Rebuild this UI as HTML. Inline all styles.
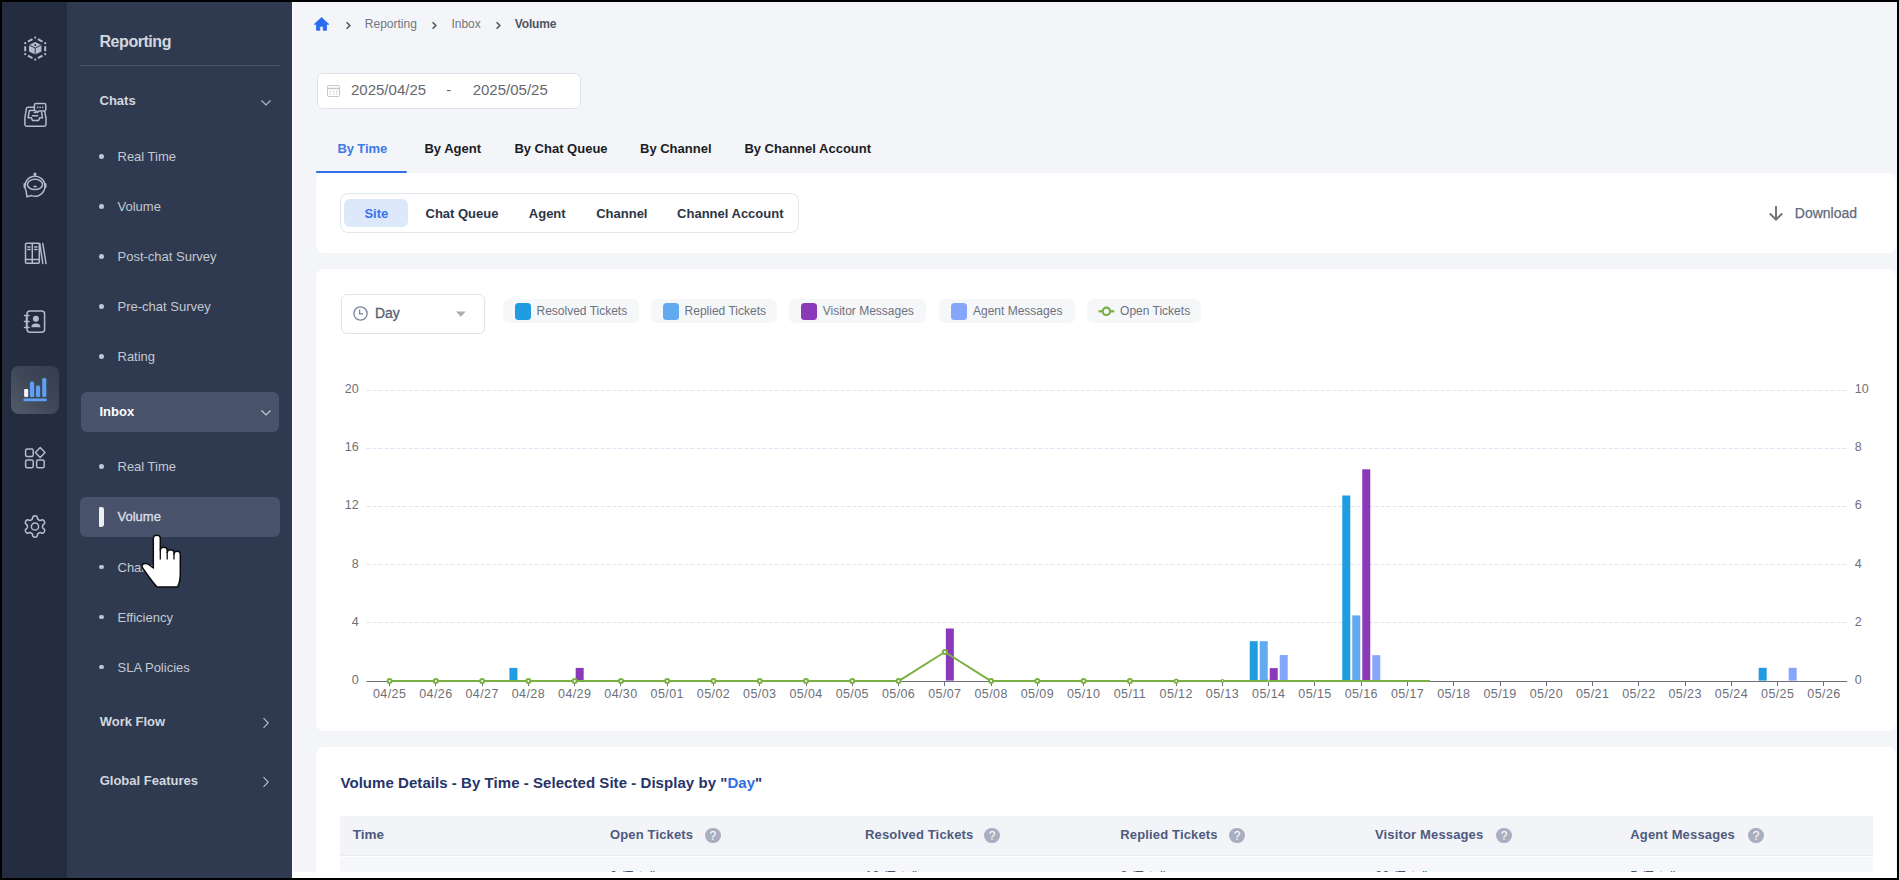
<!DOCTYPE html>
<html><head><meta charset="utf-8">
<style>
*{margin:0;padding:0;box-sizing:border-box}
html,body{width:1899px;height:880px;overflow:hidden;background:#000}
body{font-family:"Liberation Sans",sans-serif;position:relative}
.a{position:absolute;white-space:nowrap}
.t{position:absolute;white-space:nowrap;line-height:1}
</style></head><body>
<div class="a" style="left:2px;top:2px;width:65px;height:876px;background:#232d3f"></div>
<div class="a" style="left:11px;top:366px;width:48px;height:48px;border-radius:8px;background:linear-gradient(45deg,#545c6c 0%,#3f4858 50%,#343d4f 100%)"></div>
<svg class="a" style="left:0;top:0" width="67" height="880" viewBox="0 0 67 880">
<g fill="none" stroke="#b4bbca" stroke-width="1.5" stroke-linecap="round" stroke-linejoin="round">
 <!-- hex dashed -->
 <path d="M37.90 39.11 L42.50 41.69 M45.20 46.17 L45.20 51.23 M42.50 55.66 L37.90 58.14 M32.50 58.14 L27.90 55.66 M25.20 51.23 L25.20 46.17 M27.90 41.69 L32.50 39.11" stroke-width="2" stroke-linecap="butt"/>
 <!-- inbox -->
 <path d="M34 107.3 H28 Q26.6 107.3 26.3 108.8 L24.9 118 V124.6 Q24.9 126.3 26.6 126.3 H44.3 Q46 126.3 46 124.6 V118 L44.6 111.4"/>
 <path d="M34 110.4 H29.4 L28.1 117.7 H31.2 L32.6 120.6 H38.4 L39.8 117.7 H42.5 L41.6 112.6"/>
 <path d="M32.4 115.8 H37.7 M34.3 112.6 H35.8"/>
 <path d="M36 103.6 H44.2 Q45.8 103.6 45.8 105.2 V109.4 Q45.8 111 44.2 111 H38.8 L37.4 112.6 L36.2 111 H36 Q34.4 111 34.4 109.4 V105.2 Q34.4 103.6 36 103.6 Z"/>
 <!-- bot -->
 <path d="M31.6 195.6 A10 10 0 1 0 26.2 191 L26.9 196.8 Z"/>
 <ellipse cx="35" cy="184.4" rx="7.6" ry="5.1" />
 <path d="M34 186.6 H36.2 M35 174.5 V176"/>
 <path d="M24.6 184 V187 M45.4 184 V187" stroke-width="2.2"/>
 <!-- books -->
 <rect x="25.5" y="243.3" width="13.8" height="20" rx="1"/>
 <path d="M32.3 243.5 V263 M25.5 259.5 H39.3 M27.8 247 H30 M27.8 249.5 H30 M34.7 247 H37 M34.7 249.5 H37 M39.8 243.5 L42.8 263.5 M42.8 243.5 L46 263.5"/>
 <!-- contacts -->
 <rect x="27" y="311" width="17.6" height="21.2" rx="3"/>
 <path d="M24.5 315.5 H29 M24.5 321.5 H29 M24.5 327.5 H29 M26.5 316.5 V320.5 M26.5 322.5 V326.5"/>
 <!-- apps -->
 <rect x="25.6" y="448.9" width="7.6" height="7.6" rx="1.5"/>
 <rect x="25.6" y="460.1" width="7.6" height="7.6" rx="1.5"/>
 <rect x="36.6" y="460.1" width="7.6" height="7.6" rx="1.5"/>
 <path d="M40.2 447.6 L45 452.5 L40.2 457.4 L35.4 452.5 Z"/>
 <!-- gear -->
 <circle cx="35" cy="526.5" r="3.6"/>
 <path d="M42.60 526.50 L42.60 526.63 L42.60 526.77 L42.61 526.90 L42.61 527.03 L42.62 527.17 L42.64 527.30 L42.66 527.44 L42.70 527.58 L42.76 527.73 L42.84 527.88 L42.96 528.05 L43.12 528.23 L43.31 528.42 L43.54 528.63 L43.79 528.86 L44.03 529.09 L44.24 529.33 L44.42 529.56 L44.54 529.78 L44.62 530.00 L44.66 530.21 L44.66 530.40 L44.65 530.59 L44.61 530.78 L44.56 530.96 L44.50 531.13 L44.43 531.31 L44.35 531.47 L44.27 531.64 L44.18 531.80 L44.08 531.96 L43.98 532.11 L43.88 532.26 L43.76 532.41 L43.64 532.55 L43.51 532.68 L43.37 532.81 L43.21 532.92 L43.04 533.01 L42.84 533.08 L42.61 533.12 L42.36 533.12 L42.07 533.09 L41.76 533.03 L41.43 532.93 L41.12 532.83 L40.82 532.74 L40.55 532.67 L40.32 532.62 L40.12 532.60 L39.94 532.61 L39.79 532.63 L39.65 532.67 L39.51 532.71 L39.39 532.77 L39.27 532.83 L39.15 532.89 L39.03 532.95 L38.92 533.02 L38.80 533.08 L38.69 533.15 L38.57 533.22 L38.46 533.29 L38.34 533.36 L38.23 533.43 L38.12 533.52 L38.02 533.61 L37.91 533.71 L37.82 533.83 L37.72 533.98 L37.64 534.17 L37.56 534.39 L37.49 534.66 L37.43 534.96 L37.36 535.29 L37.27 535.62 L37.17 535.92 L37.06 536.18 L36.93 536.40 L36.78 536.58 L36.62 536.72 L36.45 536.82 L36.28 536.90 L36.10 536.96 L35.92 537.01 L35.74 537.04 L35.55 537.07 L35.37 537.09 L35.18 537.10 L35.00 537.10 L34.82 537.10 L34.63 537.09 L34.45 537.07 L34.26 537.04 L34.08 537.01 L33.90 536.96 L33.72 536.90 L33.55 536.82 L33.38 536.72 L33.22 536.58 L33.07 536.40 L32.94 536.18 L32.83 535.92 L32.73 535.62 L32.64 535.29 L32.57 534.96 L32.51 534.66 L32.44 534.39 L32.36 534.17 L32.28 533.98 L32.18 533.83 L32.09 533.71 L31.98 533.61 L31.88 533.52 L31.77 533.43 L31.66 533.36 L31.54 533.29 L31.43 533.22 L31.31 533.15 L31.20 533.08 L31.08 533.02 L30.97 532.95 L30.85 532.89 L30.73 532.83 L30.61 532.77 L30.49 532.71 L30.35 532.67 L30.21 532.63 L30.06 532.61 L29.88 532.60 L29.68 532.62 L29.45 532.67 L29.18 532.74 L28.88 532.83 L28.57 532.93 L28.24 533.03 L27.93 533.09 L27.64 533.12 L27.39 533.12 L27.16 533.08 L26.96 533.01 L26.79 532.92 L26.63 532.81 L26.49 532.68 L26.36 532.55 L26.24 532.41 L26.12 532.26 L26.02 532.11 L25.92 531.96 L25.82 531.80 L25.73 531.64 L25.65 531.47 L25.57 531.31 L25.50 531.13 L25.44 530.96 L25.39 530.78 L25.35 530.59 L25.34 530.40 L25.34 530.21 L25.38 530.00 L25.46 529.78 L25.58 529.56 L25.76 529.33 L25.97 529.09 L26.21 528.86 L26.46 528.63 L26.69 528.42 L26.88 528.23 L27.04 528.05 L27.16 527.88 L27.24 527.73 L27.30 527.58 L27.34 527.44 L27.36 527.30 L27.38 527.17 L27.39 527.03 L27.39 526.90 L27.40 526.77 L27.40 526.63 L27.40 526.50 L27.40 526.37 L27.40 526.23 L27.39 526.10 L27.39 525.97 L27.38 525.83 L27.36 525.70 L27.34 525.56 L27.30 525.42 L27.24 525.27 L27.16 525.12 L27.04 524.95 L26.88 524.77 L26.69 524.58 L26.46 524.37 L26.21 524.14 L25.97 523.91 L25.76 523.67 L25.58 523.44 L25.46 523.22 L25.38 523.00 L25.34 522.79 L25.34 522.60 L25.35 522.41 L25.39 522.22 L25.44 522.04 L25.50 521.87 L25.57 521.69 L25.65 521.53 L25.73 521.36 L25.82 521.20 L25.92 521.04 L26.02 520.89 L26.12 520.74 L26.24 520.59 L26.36 520.45 L26.49 520.32 L26.63 520.19 L26.79 520.08 L26.96 519.99 L27.16 519.92 L27.39 519.88 L27.64 519.88 L27.93 519.91 L28.24 519.97 L28.57 520.07 L28.88 520.17 L29.18 520.26 L29.45 520.33 L29.68 520.38 L29.88 520.40 L30.06 520.39 L30.21 520.37 L30.35 520.33 L30.49 520.29 L30.61 520.23 L30.73 520.17 L30.85 520.11 L30.97 520.05 L31.08 519.98 L31.20 519.92 L31.31 519.85 L31.43 519.78 L31.54 519.71 L31.66 519.64 L31.77 519.57 L31.88 519.48 L31.98 519.39 L32.09 519.29 L32.18 519.17 L32.28 519.02 L32.36 518.83 L32.44 518.61 L32.51 518.34 L32.57 518.04 L32.64 517.71 L32.73 517.38 L32.83 517.08 L32.94 516.82 L33.07 516.60 L33.22 516.42 L33.38 516.28 L33.55 516.18 L33.72 516.10 L33.90 516.04 L34.08 515.99 L34.26 515.96 L34.45 515.93 L34.63 515.91 L34.82 515.90 L35.00 515.90 L35.18 515.90 L35.37 515.91 L35.55 515.93 L35.74 515.96 L35.92 515.99 L36.10 516.04 L36.28 516.10 L36.45 516.18 L36.62 516.28 L36.78 516.42 L36.93 516.60 L37.06 516.82 L37.17 517.08 L37.27 517.38 L37.36 517.71 L37.43 518.04 L37.49 518.34 L37.56 518.61 L37.64 518.83 L37.72 519.02 L37.82 519.17 L37.91 519.29 L38.02 519.39 L38.12 519.48 L38.23 519.57 L38.34 519.64 L38.46 519.71 L38.57 519.78 L38.69 519.85 L38.80 519.92 L38.92 519.98 L39.03 520.05 L39.15 520.11 L39.27 520.17 L39.39 520.23 L39.51 520.29 L39.65 520.33 L39.79 520.37 L39.94 520.39 L40.12 520.40 L40.32 520.38 L40.55 520.33 L40.82 520.26 L41.12 520.17 L41.43 520.07 L41.76 519.97 L42.07 519.91 L42.36 519.88 L42.61 519.88 L42.84 519.92 L43.04 519.99 L43.21 520.08 L43.37 520.19 L43.51 520.32 L43.64 520.45 L43.76 520.59 L43.88 520.74 L43.98 520.89 L44.08 521.04 L44.18 521.20 L44.27 521.36 L44.35 521.53 L44.43 521.69 L44.50 521.87 L44.56 522.04 L44.61 522.22 L44.65 522.41 L44.66 522.60 L44.66 522.79 L44.62 523.00 L44.54 523.22 L44.42 523.44 L44.24 523.67 L44.03 523.91 L43.79 524.14 L43.54 524.37 L43.31 524.58 L43.12 524.77 L42.96 524.95 L42.84 525.12 L42.76 525.27 L42.70 525.42 L42.66 525.56 L42.64 525.70 L42.62 525.83 L42.61 525.97 L42.61 526.10 L42.60 526.23 L42.60 526.37Z" stroke-width="1.6"/>
</g>
<g fill="#b4bbca">
 <circle cx="35.2" cy="37.6" r="1.1"/><circle cx="35.2" cy="59.6" r="1.1"/>
 <circle cx="25.2" cy="43.2" r="1.1"/><circle cx="45.2" cy="43.2" r="1.1"/>
 <circle cx="25.2" cy="54.2" r="1.1"/><circle cx="45.2" cy="54.2" r="1.1"/>
 <path d="M29 45 L35.2 42 L41.4 45 L41.4 51.5 L35.2 54.6 L29 51.5 Z"/>
 <rect x="36.9" y="106.6" width="1.5" height="1.5"/><rect x="39.4" y="106.6" width="1.5" height="1.5"/><rect x="41.9" y="106.6" width="1.5" height="1.5"/>
 <circle cx="35" cy="174" r="1.6"/>
 <circle cx="35.9" cy="318.7" r="3"/>
 <path d="M31.3 327.3 Q31.3 323.4 35.9 323.4 Q40.5 323.4 40.5 327.3 Z"/>
</g>
<g stroke="#232d3f" stroke-width="0.9" fill="none">
 <path d="M29 45 L35.2 48 L41.4 45 M35.2 48 V54.6"/>
</g>
<circle cx="35.2" cy="45" r="0.9" fill="#232d3f"/>
<!-- chart icon -->
<rect x="24.1" y="389" width="4.1" height="8" rx="1.2" fill="#f4f5f7"/>
<rect x="29.9" y="381.5" width="4.3" height="15.5" rx="1.5" fill="#5e9ff6"/>
<rect x="36" y="385.6" width="4.1" height="11.4" rx="1.5" fill="#5e9ff6"/>
<rect x="42.2" y="377.9" width="4.1" height="19.1" rx="1.5" fill="#5e9ff6"/>
<rect x="23.4" y="398.5" width="23.5" height="2.7" rx="1.3" fill="#5e9ff6"/>
</svg>
<div class="a" style="left:67px;top:2px;width:225px;height:876px;background:#2f3a50"></div>
<div class="t" style="left:99.5px;top:34.12px;font-size:16px;color:#d3d7de;font-weight:bold;letter-spacing:-0.45px;">Reporting</div>
<div class="a" style="left:80px;top:65px;width:200px;height:1px;background:#4a5468"></div>
<div class="t" style="left:99.5px;top:94.37px;font-size:13px;color:#d3d7de;font-weight:bold;">Chats</div>
<svg class="a" style="left:260px;top:98.5px" width="12" height="8" viewBox="0 0 12 8"><path d="M1.5 1.5 L6 6 L10.5 1.5" fill="none" stroke="#b8bec9" stroke-width="1.1"/></svg>
<div class="a" style="left:99px;top:154.1px;width:4.6px;height:4.6px;border-radius:50%;background:#c0c5ce"></div>
<div class="t" style="left:117.5px;top:150.27px;font-size:13px;color:#c3c8d1;">Real Time</div>
<div class="a" style="left:99px;top:204.1px;width:4.6px;height:4.6px;border-radius:50%;background:#c0c5ce"></div>
<div class="t" style="left:117.5px;top:200.27px;font-size:13px;color:#c3c8d1;">Volume</div>
<div class="a" style="left:99px;top:254.1px;width:4.6px;height:4.6px;border-radius:50%;background:#c0c5ce"></div>
<div class="t" style="left:117.5px;top:250.27px;font-size:13px;color:#c3c8d1;">Post-chat Survey</div>
<div class="a" style="left:99px;top:304.1px;width:4.6px;height:4.6px;border-radius:50%;background:#c0c5ce"></div>
<div class="t" style="left:117.5px;top:300.27px;font-size:13px;color:#c3c8d1;">Pre-chat Survey</div>
<div class="a" style="left:99px;top:354.1px;width:4.6px;height:4.6px;border-radius:50%;background:#c0c5ce"></div>
<div class="t" style="left:117.5px;top:350.27px;font-size:13px;color:#c3c8d1;">Rating</div>
<div class="a" style="left:81px;top:392px;width:198px;height:40px;background:#48526a;border-radius:6px"></div>
<div class="t" style="left:99.5px;top:404.67px;font-size:13px;color:#ffffff;font-weight:bold;">Inbox</div>
<svg class="a" style="left:260px;top:408.5px" width="12" height="8" viewBox="0 0 12 8"><path d="M1.5 1.5 L6 6 L10.5 1.5" fill="none" stroke="#c9ced7" stroke-width="1.1"/></svg>
<div class="a" style="left:80px;top:496.5px;width:200px;height:40px;background:#48526a;border-radius:6px"></div>
<div class="a" style="left:99px;top:506.5px;width:4.5px;height:20.5px;background:#eceef2;border-radius:1.2px 2.4px 2.4px 1.2px"></div>
<div class="a" style="left:99px;top:464.1px;width:4.6px;height:4.6px;border-radius:50%;background:#c0c5ce"></div>
<div class="t" style="left:117.5px;top:460.27px;font-size:13px;color:#c3c8d1;">Real Time</div>
<div class="t" style="left:117.5px;top:510.47px;font-size:13px;color:#dcdfe6;-webkit-text-stroke:0.35px #dcdfe6;">Volume</div>
<div class="a" style="left:99px;top:564.5px;width:4.6px;height:4.6px;border-radius:50%;background:#c0c5ce"></div>
<div class="t" style="left:117.5px;top:560.67px;font-size:13px;color:#c3c8d1;">Channel</div>
<div class="a" style="left:99px;top:614.5px;width:4.6px;height:4.6px;border-radius:50%;background:#c0c5ce"></div>
<div class="t" style="left:117.5px;top:610.67px;font-size:13px;color:#c3c8d1;">Efficiency</div>
<div class="a" style="left:99px;top:664.5px;width:4.6px;height:4.6px;border-radius:50%;background:#c0c5ce"></div>
<div class="t" style="left:117.5px;top:660.67px;font-size:13px;color:#c3c8d1;">SLA Policies</div>
<div class="t" style="left:99.7px;top:715.37px;font-size:13px;color:#d3d7de;font-weight:bold;">Work Flow</div>
<svg class="a" style="left:261.5px;top:716.8px" width="8" height="12" viewBox="0 0 8 12"><path d="M1.5 1.2 L6.2 6 L1.5 10.8" fill="none" stroke="#b8bec9" stroke-width="1.1"/></svg>
<div class="t" style="left:99.7px;top:774.07px;font-size:13px;color:#d3d7de;font-weight:bold;">Global Features</div>
<svg class="a" style="left:261.5px;top:776.2px" width="8" height="12" viewBox="0 0 8 12"><path d="M1.5 1.2 L6.2 6 L1.5 10.8" fill="none" stroke="#b8bec9" stroke-width="1.1"/></svg>
<div class="a" style="left:292px;top:2px;width:1605px;height:876px;background:#f4f5f8"></div>
<svg class="a" style="left:313px;top:16px" width="17" height="16" viewBox="0 0 17 16"><path d="M8.5 1.5 L15.8 8.3 H13.5 V14.3 H10.2 V10.3 H6.8 V14.3 H3.5 V8.3 H1.2 Z" fill="#2b6cf0" stroke="#2b6cf0" stroke-width="0.8" stroke-linejoin="round"/></svg>
<svg class="a" style="left:344.5px;top:21px" width="7" height="9" viewBox="0 0 7 9"><path d="M1.6 1.3 L4.8 4.5 L1.6 7.7" fill="none" stroke="#4a5060" stroke-width="1.5"/></svg>
<svg class="a" style="left:431.3px;top:21px" width="7" height="9" viewBox="0 0 7 9"><path d="M1.6 1.3 L4.8 4.5 L1.6 7.7" fill="none" stroke="#4a5060" stroke-width="1.5"/></svg>
<svg class="a" style="left:494.6px;top:21px" width="7" height="9" viewBox="0 0 7 9"><path d="M1.6 1.3 L4.8 4.5 L1.6 7.7" fill="none" stroke="#4a5060" stroke-width="1.5"/></svg>
<div class="t" style="left:364.8px;top:17.89px;font-size:12px;color:#70757f;">Reporting</div>
<div class="t" style="left:451.4px;top:17.89px;font-size:12px;color:#70757f;">Inbox</div>
<div class="t" style="left:514.8px;top:17.89px;font-size:12px;color:#4e5563;font-weight:bold;letter-spacing:-0.15px;">Volume</div>
<div class="a" style="left:316.5px;top:73px;width:264px;height:35.5px;background:#fff;border:1px solid #dfe2e8;border-radius:6px"></div>
<svg class="a" style="left:326px;top:84px" width="15" height="14" viewBox="0 0 15 14"><rect x="1.5" y="1.5" width="12" height="11" rx="1" fill="none" stroke="#c3c7ce" stroke-width="1"/><path d="M1.5 4.5 H13.5" stroke="#c3c7ce" stroke-width="1.5"/><path d="M3.5 7.5 H5 M6.8 7.5 H8.3 M10 7.5 H11.5 M3.5 10 H5 M6.8 10 H8.3 M10 10 H11.5" stroke="#c3c7ce" stroke-width="1"/></svg>
<div class="t" style="left:351px;top:82.04px;font-size:15px;color:#66696e;">2025/04/25</div>
<div class="t" style="left:446.2px;top:82.04px;font-size:15px;color:#66696e;">-</div>
<div class="t" style="left:472.7px;top:82.04px;font-size:15px;color:#66696e;">2025/05/25</div>
<div class="t" style="left:337.4px;top:142.47px;font-size:13px;color:#4079e8;font-weight:bold;letter-spacing:-0.1px;">By Time</div>
<div class="t" style="left:424.4px;top:142.47px;font-size:13px;color:#1b1c1f;font-weight:bold;">By Agent</div>
<div class="t" style="left:514.4px;top:142.47px;font-size:13px;color:#1b1c1f;font-weight:bold;">By Chat Queue</div>
<div class="t" style="left:640px;top:142.47px;font-size:13px;color:#1b1c1f;font-weight:bold;">By Channel</div>
<div class="t" style="left:744.4px;top:142.47px;font-size:13px;color:#1b1c1f;font-weight:bold;">By Channel Account</div>
<div class="a" style="left:316px;top:173px;width:1580px;height:80px;background:#fff;border-radius:8px"></div>
<div class="a" style="left:316px;top:171px;width:91px;height:2px;background:#2f6fe8;border-radius:1px"></div>
<div class="a" style="left:340px;top:193px;width:459px;height:40px;background:#fff;border:1px solid #e3e6ec;border-radius:8px"></div>
<div class="a" style="left:343.6px;top:199px;width:64.2px;height:28px;background:#dde8fa;border-radius:6px"></div>
<div class="t" style="left:364.4px;top:206.87px;font-size:13px;color:#3574e8;font-weight:bold;">Site</div>
<div class="t" style="left:425.5px;top:206.87px;font-size:13px;color:#2b3446;font-weight:bold;">Chat Queue</div>
<div class="t" style="left:528.8px;top:206.87px;font-size:13px;color:#2b3446;font-weight:bold;">Agent</div>
<div class="t" style="left:596.2px;top:206.87px;font-size:13px;color:#2b3446;font-weight:bold;">Channel</div>
<div class="t" style="left:677.1px;top:206.87px;font-size:13px;color:#2b3446;font-weight:bold;">Channel Account</div>
<svg class="a" style="left:1767px;top:204px" width="18" height="18" viewBox="0 0 18 18"><path d="M9 2 V15.5 M2.8 9.5 L9 15.7 L15.2 9.5" fill="none" stroke="#6d7076" stroke-width="1.9" stroke-linejoin="miter"/></svg>
<div class="t" style="left:1794.8px;top:206.35px;font-size:14px;color:#5f6b7a;-webkit-text-stroke:0.25px #5f6b7a;">Download</div>
<div class="a" style="left:316px;top:269px;width:1580px;height:462px;background:#fff;border-radius:8px"></div>
<div class="a" style="left:340.5px;top:293.5px;width:144px;height:40px;background:#fff;border:1px solid #e0e3e9;border-radius:6px"></div>
<svg class="a" style="left:352px;top:305px" width="17" height="17" viewBox="0 0 17 17"><circle cx="8.5" cy="8.5" r="6.6" fill="none" stroke="#7b829c" stroke-width="1.3"/><path d="M7.6 4.6 V8.9 H11" fill="none" stroke="#7b829c" stroke-width="1.3"/></svg>
<div class="t" style="left:374.9px;top:305.86px;font-size:14px;color:#5a6070;-webkit-text-stroke:0.3px #5a6070;">Day</div>
<svg class="a" style="left:455px;top:311px" width="12" height="7" viewBox="0 0 12 7"><path d="M1 0.6 H10.8 L5.9 5.8 Z" fill="#a9adb5"/></svg>
<div class="a" style="left:503.3px;top:299.4px;width:135.5px;height:24px;background:#f6f7f9;border-radius:6px"></div>
<div class="a" style="left:515.1px;top:303.4px;width:16px;height:16.3px;background:#1f9de0;border-radius:3.5px"></div>
<div class="t" style="left:536.5px;top:304.99px;font-size:12px;color:#6b7280;">Resolved Tickets</div>
<div class="a" style="left:651px;top:299.4px;width:126.0px;height:24px;background:#f6f7f9;border-radius:6px"></div>
<div class="a" style="left:662.8px;top:303.4px;width:16px;height:16.3px;background:#62aaf0;border-radius:3.5px"></div>
<div class="t" style="left:684.6px;top:304.99px;font-size:12px;color:#6b7280;">Replied Tickets</div>
<div class="a" style="left:789.4px;top:299.4px;width:137.1px;height:24px;background:#f6f7f9;border-radius:6px"></div>
<div class="a" style="left:801.3px;top:303.4px;width:16px;height:16.3px;background:#8a3ab9;border-radius:3.5px"></div>
<div class="t" style="left:822.7px;top:304.99px;font-size:12px;color:#6b7280;">Visitor Messages</div>
<div class="a" style="left:939.2px;top:299.4px;width:135.4px;height:24px;background:#f6f7f9;border-radius:6px"></div>
<div class="a" style="left:950.9px;top:303.4px;width:16px;height:16.3px;background:#86a6fb;border-radius:3.5px"></div>
<div class="t" style="left:973px;top:304.99px;font-size:12px;color:#6b7280;">Agent Messages</div>
<div class="a" style="left:1087.1px;top:299.4px;width:113.5px;height:24px;background:#f6f7f9;border-radius:6px"></div>
<svg class="a" style="left:1097px;top:304px" width="19" height="15" viewBox="0 0 19 15"><path d="M1.5 7.3 H17.3" stroke="#7ab043" stroke-width="2.2"/><circle cx="9.4" cy="7.3" r="3.7" fill="#f6f7f9" stroke="#7ab043" stroke-width="2.2"/></svg>
<div class="t" style="left:1120.1px;top:304.99px;font-size:12px;color:#6b7280;">Open Tickets</div>
<svg class="a" style="left:0;top:0" width="1899" height="880" viewBox="0 0 1899 880">
<path d="M366.5 622.5 H1847.2" stroke="#dfe3f2" stroke-width="1" stroke-dasharray="4 2"/>
<path d="M366.5 564.5 H1847.2" stroke="#dfe3f2" stroke-width="1" stroke-dasharray="4 2"/>
<path d="M366.5 506.5 H1847.2" stroke="#dfe3f2" stroke-width="1" stroke-dasharray="4 2"/>
<path d="M366.5 448.5 H1847.2" stroke="#dfe3f2" stroke-width="1" stroke-dasharray="4 2"/>
<path d="M366.5 390.5 H1847.2" stroke="#dfe3f2" stroke-width="1" stroke-dasharray="4 2"/>
<path d="M366.5 681.5 H1847.2" stroke="#6e7079" stroke-width="1"/>
<path d="M389.5 681.5 V686" stroke="#6e7079" stroke-width="1"/>
<path d="M435.5 681.5 V686" stroke="#6e7079" stroke-width="1"/>
<path d="M482.5 681.5 V686" stroke="#6e7079" stroke-width="1"/>
<path d="M528.5 681.5 V686" stroke="#6e7079" stroke-width="1"/>
<path d="M574.5 681.5 V686" stroke="#6e7079" stroke-width="1"/>
<path d="M620.5 681.5 V686" stroke="#6e7079" stroke-width="1"/>
<path d="M667.5 681.5 V686" stroke="#6e7079" stroke-width="1"/>
<path d="M713.5 681.5 V686" stroke="#6e7079" stroke-width="1"/>
<path d="M759.5 681.5 V686" stroke="#6e7079" stroke-width="1"/>
<path d="M806.5 681.5 V686" stroke="#6e7079" stroke-width="1"/>
<path d="M852.5 681.5 V686" stroke="#6e7079" stroke-width="1"/>
<path d="M898.5 681.5 V686" stroke="#6e7079" stroke-width="1"/>
<path d="M944.5 681.5 V686" stroke="#6e7079" stroke-width="1"/>
<path d="M991.5 681.5 V686" stroke="#6e7079" stroke-width="1"/>
<path d="M1037.5 681.5 V686" stroke="#6e7079" stroke-width="1"/>
<path d="M1083.5 681.5 V686" stroke="#6e7079" stroke-width="1"/>
<path d="M1129.5 681.5 V686" stroke="#6e7079" stroke-width="1"/>
<path d="M1176.5 681.5 V686" stroke="#6e7079" stroke-width="1"/>
<path d="M1222.5 681.5 V686" stroke="#6e7079" stroke-width="1"/>
<path d="M1268.5 681.5 V686" stroke="#6e7079" stroke-width="1"/>
<path d="M1314.5 681.5 V686" stroke="#6e7079" stroke-width="1"/>
<path d="M1361.5 681.5 V686" stroke="#6e7079" stroke-width="1"/>
<path d="M1407.5 681.5 V686" stroke="#6e7079" stroke-width="1"/>
<path d="M1453.5 681.5 V686" stroke="#6e7079" stroke-width="1"/>
<path d="M1500.5 681.5 V686" stroke="#6e7079" stroke-width="1"/>
<path d="M1546.5 681.5 V686" stroke="#6e7079" stroke-width="1"/>
<path d="M1592.5 681.5 V686" stroke="#6e7079" stroke-width="1"/>
<path d="M1638.5 681.5 V686" stroke="#6e7079" stroke-width="1"/>
<path d="M1685.5 681.5 V686" stroke="#6e7079" stroke-width="1"/>
<path d="M1731.5 681.5 V686" stroke="#6e7079" stroke-width="1"/>
<path d="M1777.5 681.5 V686" stroke="#6e7079" stroke-width="1"/>
<path d="M1823.5 681.5 V686" stroke="#6e7079" stroke-width="1"/>
<rect x="509.41" y="667.90" width="8" height="12.70" fill="#1f9de0"/>
<rect x="575.68" y="667.90" width="8" height="12.70" fill="#8a3ab9"/>
<rect x="945.84" y="628.50" width="8" height="52.10" fill="#8a3ab9"/>
<rect x="1249.73" y="641.20" width="8" height="39.40" fill="#1f9de0"/>
<rect x="1259.73" y="641.20" width="8" height="39.40" fill="#62aaf0"/>
<rect x="1269.73" y="668.10" width="8" height="12.50" fill="#8a3ab9"/>
<rect x="1279.73" y="655.00" width="8" height="25.60" fill="#86a6fb"/>
<rect x="1342.27" y="495.50" width="8" height="185.10" fill="#1f9de0"/>
<rect x="1352.27" y="615.40" width="8" height="65.20" fill="#62aaf0"/>
<rect x="1362.27" y="469.30" width="8" height="211.30" fill="#8a3ab9"/>
<rect x="1372.27" y="655.20" width="8" height="25.40" fill="#86a6fb"/>
<rect x="1758.70" y="667.80" width="8" height="12.80" fill="#1f9de0"/>
<rect x="1788.70" y="667.80" width="8" height="12.80" fill="#86a6fb"/>
<path d="M389.60 681.10 L435.87 681.10 L482.14 681.10 L528.41 681.10 L574.68 681.10 L620.95 681.10 L667.22 681.10 L713.49 681.10 L759.76 681.10 L806.03 681.10 L852.30 681.10 L898.57 681.10 L944.84 652.00 L991.11 681.10 L1037.38 681.10 L1083.65 681.10 L1129.92 681.10 L1176.19 681.10 L1222.46 681.10 L1268.73 681.10 L1315.00 681.10 L1361.27 681.10 L1407.54 681.10 L1430 681.1" fill="none" stroke="#7ab043" stroke-width="2" stroke-linejoin="round"/>
<circle cx="389.60" cy="681.10" r="2.0" fill="#fff" stroke="#7ab043" stroke-width="2.0"/>
<circle cx="435.87" cy="681.10" r="2.0" fill="#fff" stroke="#7ab043" stroke-width="2.0"/>
<circle cx="482.14" cy="681.10" r="2.0" fill="#fff" stroke="#7ab043" stroke-width="2.0"/>
<circle cx="528.41" cy="681.10" r="2.0" fill="#fff" stroke="#7ab043" stroke-width="2.0"/>
<circle cx="574.68" cy="681.10" r="2.0" fill="#fff" stroke="#7ab043" stroke-width="2.0"/>
<circle cx="620.95" cy="681.10" r="2.0" fill="#fff" stroke="#7ab043" stroke-width="2.0"/>
<circle cx="667.22" cy="681.10" r="2.0" fill="#fff" stroke="#7ab043" stroke-width="2.0"/>
<circle cx="713.49" cy="681.10" r="2.0" fill="#fff" stroke="#7ab043" stroke-width="2.0"/>
<circle cx="759.76" cy="681.10" r="2.0" fill="#fff" stroke="#7ab043" stroke-width="2.0"/>
<circle cx="806.03" cy="681.10" r="2.0" fill="#fff" stroke="#7ab043" stroke-width="2.0"/>
<circle cx="852.30" cy="681.10" r="2.0" fill="#fff" stroke="#7ab043" stroke-width="2.0"/>
<circle cx="898.57" cy="681.10" r="2.0" fill="#fff" stroke="#7ab043" stroke-width="2.0"/>
<circle cx="944.84" cy="652.00" r="2.0" fill="#fff" stroke="#7ab043" stroke-width="2.0"/>
<circle cx="991.11" cy="681.10" r="2.0" fill="#fff" stroke="#7ab043" stroke-width="2.0"/>
<circle cx="1037.38" cy="681.10" r="2.0" fill="#fff" stroke="#7ab043" stroke-width="2.0"/>
<circle cx="1083.65" cy="681.10" r="2.0" fill="#fff" stroke="#7ab043" stroke-width="2.0"/>
<circle cx="1129.92" cy="681.10" r="2.0" fill="#fff" stroke="#7ab043" stroke-width="2.0"/>
<circle cx="1176.19" cy="681.10" r="1.74" fill="#fff" stroke="#7ab043" stroke-width="1.74"/>
<circle cx="1222.46" cy="681.10" r="1.34" fill="#fff" stroke="#7ab043" stroke-width="1.34"/>
<circle cx="1268.73" cy="681.10" r="1.0" fill="#fff" stroke="#7ab043" stroke-width="1.0"/>
<circle cx="1315.00" cy="681.10" r="0.66" fill="#fff" stroke="#7ab043" stroke-width="0.66"/>
<circle cx="1361.27" cy="681.10" r="0.4" fill="#fff" stroke="#7ab043" stroke-width="0.4"/>
<circle cx="1407.54" cy="681.10" r="0.2" fill="#fff" stroke="#7ab043" stroke-width="0.2"/>
</svg>
<div class="t" style="left:258.6px;width:100px;text-align:right;top:673.90px;font-size:12.5px;color:#6e7079">0</div>
<div class="t" style="left:1854.7px;top:673.90px;font-size:12.5px;color:#6e7079">0</div>
<div class="t" style="left:258.6px;width:100px;text-align:right;top:615.70px;font-size:12.5px;color:#6e7079">4</div>
<div class="t" style="left:1854.7px;top:615.70px;font-size:12.5px;color:#6e7079">2</div>
<div class="t" style="left:258.6px;width:100px;text-align:right;top:557.50px;font-size:12.5px;color:#6e7079">8</div>
<div class="t" style="left:1854.7px;top:557.50px;font-size:12.5px;color:#6e7079">4</div>
<div class="t" style="left:258.6px;width:100px;text-align:right;top:499.30px;font-size:12.5px;color:#6e7079">12</div>
<div class="t" style="left:1854.7px;top:499.30px;font-size:12.5px;color:#6e7079">6</div>
<div class="t" style="left:258.6px;width:100px;text-align:right;top:441.10px;font-size:12.5px;color:#6e7079">16</div>
<div class="t" style="left:1854.7px;top:441.10px;font-size:12.5px;color:#6e7079">8</div>
<div class="t" style="left:258.6px;width:100px;text-align:right;top:382.90px;font-size:12.5px;color:#6e7079">20</div>
<div class="t" style="left:1854.7px;top:382.90px;font-size:12.5px;color:#6e7079">10</div>
<div class="t" style="left:349.60px;width:80px;text-align:center;top:687.6px;font-size:12.5px;letter-spacing:0.4px;color:#6e7079">04/25</div>
<div class="t" style="left:395.87px;width:80px;text-align:center;top:687.6px;font-size:12.5px;letter-spacing:0.4px;color:#6e7079">04/26</div>
<div class="t" style="left:442.14px;width:80px;text-align:center;top:687.6px;font-size:12.5px;letter-spacing:0.4px;color:#6e7079">04/27</div>
<div class="t" style="left:488.41px;width:80px;text-align:center;top:687.6px;font-size:12.5px;letter-spacing:0.4px;color:#6e7079">04/28</div>
<div class="t" style="left:534.68px;width:80px;text-align:center;top:687.6px;font-size:12.5px;letter-spacing:0.4px;color:#6e7079">04/29</div>
<div class="t" style="left:580.95px;width:80px;text-align:center;top:687.6px;font-size:12.5px;letter-spacing:0.4px;color:#6e7079">04/30</div>
<div class="t" style="left:627.22px;width:80px;text-align:center;top:687.6px;font-size:12.5px;letter-spacing:0.4px;color:#6e7079">05/01</div>
<div class="t" style="left:673.49px;width:80px;text-align:center;top:687.6px;font-size:12.5px;letter-spacing:0.4px;color:#6e7079">05/02</div>
<div class="t" style="left:719.76px;width:80px;text-align:center;top:687.6px;font-size:12.5px;letter-spacing:0.4px;color:#6e7079">05/03</div>
<div class="t" style="left:766.03px;width:80px;text-align:center;top:687.6px;font-size:12.5px;letter-spacing:0.4px;color:#6e7079">05/04</div>
<div class="t" style="left:812.30px;width:80px;text-align:center;top:687.6px;font-size:12.5px;letter-spacing:0.4px;color:#6e7079">05/05</div>
<div class="t" style="left:858.57px;width:80px;text-align:center;top:687.6px;font-size:12.5px;letter-spacing:0.4px;color:#6e7079">05/06</div>
<div class="t" style="left:904.84px;width:80px;text-align:center;top:687.6px;font-size:12.5px;letter-spacing:0.4px;color:#6e7079">05/07</div>
<div class="t" style="left:951.11px;width:80px;text-align:center;top:687.6px;font-size:12.5px;letter-spacing:0.4px;color:#6e7079">05/08</div>
<div class="t" style="left:997.38px;width:80px;text-align:center;top:687.6px;font-size:12.5px;letter-spacing:0.4px;color:#6e7079">05/09</div>
<div class="t" style="left:1043.65px;width:80px;text-align:center;top:687.6px;font-size:12.5px;letter-spacing:0.4px;color:#6e7079">05/10</div>
<div class="t" style="left:1089.92px;width:80px;text-align:center;top:687.6px;font-size:12.5px;letter-spacing:0.4px;color:#6e7079">05/11</div>
<div class="t" style="left:1136.19px;width:80px;text-align:center;top:687.6px;font-size:12.5px;letter-spacing:0.4px;color:#6e7079">05/12</div>
<div class="t" style="left:1182.46px;width:80px;text-align:center;top:687.6px;font-size:12.5px;letter-spacing:0.4px;color:#6e7079">05/13</div>
<div class="t" style="left:1228.73px;width:80px;text-align:center;top:687.6px;font-size:12.5px;letter-spacing:0.4px;color:#6e7079">05/14</div>
<div class="t" style="left:1275.00px;width:80px;text-align:center;top:687.6px;font-size:12.5px;letter-spacing:0.4px;color:#6e7079">05/15</div>
<div class="t" style="left:1321.27px;width:80px;text-align:center;top:687.6px;font-size:12.5px;letter-spacing:0.4px;color:#6e7079">05/16</div>
<div class="t" style="left:1367.54px;width:80px;text-align:center;top:687.6px;font-size:12.5px;letter-spacing:0.4px;color:#6e7079">05/17</div>
<div class="t" style="left:1413.81px;width:80px;text-align:center;top:687.6px;font-size:12.5px;letter-spacing:0.4px;color:#6e7079">05/18</div>
<div class="t" style="left:1460.08px;width:80px;text-align:center;top:687.6px;font-size:12.5px;letter-spacing:0.4px;color:#6e7079">05/19</div>
<div class="t" style="left:1506.35px;width:80px;text-align:center;top:687.6px;font-size:12.5px;letter-spacing:0.4px;color:#6e7079">05/20</div>
<div class="t" style="left:1552.62px;width:80px;text-align:center;top:687.6px;font-size:12.5px;letter-spacing:0.4px;color:#6e7079">05/21</div>
<div class="t" style="left:1598.89px;width:80px;text-align:center;top:687.6px;font-size:12.5px;letter-spacing:0.4px;color:#6e7079">05/22</div>
<div class="t" style="left:1645.16px;width:80px;text-align:center;top:687.6px;font-size:12.5px;letter-spacing:0.4px;color:#6e7079">05/23</div>
<div class="t" style="left:1691.43px;width:80px;text-align:center;top:687.6px;font-size:12.5px;letter-spacing:0.4px;color:#6e7079">05/24</div>
<div class="t" style="left:1737.70px;width:80px;text-align:center;top:687.6px;font-size:12.5px;letter-spacing:0.4px;color:#6e7079">05/25</div>
<div class="t" style="left:1783.97px;width:80px;text-align:center;top:687.6px;font-size:12.5px;letter-spacing:0.4px;color:#6e7079">05/26</div>
<div class="a" style="left:316px;top:747px;width:1580px;height:140px;background:#fff;border-radius:8px"></div>
<div class="t" style="left:340.5px;top:774.84px;font-size:15px;color:#273469;font-weight:bold;letter-spacing:0.05px;">Volume Details - By Time - Selected Site - Display by "<span style="color:#2f6fe8">Day</span>"</div>
<div class="a" style="left:340px;top:815.5px;width:1532.6px;height:40px;background:#f3f4f7"></div>
<div class="a" style="left:340px;top:855.3px;width:1532.6px;height:1px;background:#e9eaf3"></div>
<div class="a" style="left:340px;top:857.3px;width:1532.6px;height:14.7px;background:#f6f7fb"></div>
<div class="t" style="left:352.8px;top:828.11px;font-size:13.5px;color:#4d5a7f;font-weight:bold;">Time</div>
<div class="t" style="left:610px;top:828.17px;font-size:13px;color:#4d5a7f;font-weight:bold;letter-spacing:0.15px;">Open Tickets</div>
<div class="a" style="left:705.0px;top:827.9px;width:15.6px;height:15.6px;border-radius:50%;background:#a9afc0;color:#fff;font-size:12px;line-height:16px;text-align:center">?</div>
<div class="t" style="left:865px;top:828.17px;font-size:13px;color:#4d5a7f;font-weight:bold;letter-spacing:0.15px;">Resolved Tickets</div>
<div class="a" style="left:984.2px;top:827.9px;width:15.6px;height:15.6px;border-radius:50%;background:#a9afc0;color:#fff;font-size:12px;line-height:16px;text-align:center">?</div>
<div class="t" style="left:1120.3px;top:828.17px;font-size:13px;color:#4d5a7f;font-weight:bold;letter-spacing:0.15px;">Replied Tickets</div>
<div class="a" style="left:1229.2px;top:827.9px;width:15.6px;height:15.6px;border-radius:50%;background:#a9afc0;color:#fff;font-size:12px;line-height:16px;text-align:center">?</div>
<div class="t" style="left:1375px;top:828.17px;font-size:13px;color:#4d5a7f;font-weight:bold;letter-spacing:0.15px;">Visitor Messages</div>
<div class="a" style="left:1496.2px;top:827.9px;width:15.6px;height:15.6px;border-radius:50%;background:#a9afc0;color:#fff;font-size:12px;line-height:16px;text-align:center">?</div>
<div class="t" style="left:1630.3px;top:828.17px;font-size:13px;color:#4d5a7f;font-weight:bold;letter-spacing:0.15px;">Agent Messages</div>
<div class="a" style="left:1748.2px;top:827.9px;width:15.6px;height:15.6px;border-radius:50%;background:#a9afc0;color:#fff;font-size:12px;line-height:16px;text-align:center">?</div>
<div class="a" style="left:340px;top:856.5px;width:1532.6px;height:15.5px;overflow:hidden">
<div class="t" style="left:270px;top:12.3px;font-size:13px;color:#4d5563">0 (Total)</div>
<div class="t" style="left:525px;top:12.3px;font-size:13px;color:#4d5563">13 (Total)</div>
<div class="t" style="left:780.3px;top:12.3px;font-size:13px;color:#4d5563">8 (Total)</div>
<div class="t" style="left:1035px;top:12.3px;font-size:13px;color:#4d5563">22 (Total)</div>
<div class="t" style="left:1290.3px;top:12.3px;font-size:13px;color:#4d5563">5 (Total)</div>
</div>
<div class="a" style="left:292px;top:872px;width:1605px;height:6px;background:rgba(255,255,255,0.72)"></div>
<div class="a" style="left:292px;top:2px;width:1.5px;height:876px;background:rgba(255,255,255,0.4)"></div>
<svg class="a" style="left:138px;top:531px" width="48" height="60" viewBox="0 0 48 60">
<path d="M15.3 37 V7.5 Q15.3 4.3 18.8 4.3 Q22.3 4.3 22.3 7.5 V19 Q22.3 16.2 25.75 16.2 Q29.2 16.2 29.2 19 V21.5 Q29.2 18.7 32.6 18.7 Q36 18.7 36 21.5 V23 Q36 20.2 39.15 20.2 Q42.3 20.2 42.3 23 V42 Q42.3 51 39.5 56.1 H19 Q14.5 51 9.5 44 L4.6 37 Q3 34 5.6 32.8 Q8.5 31.8 11 33.6 L15.3 37 Z" fill="#fff" stroke="#0d0d0d" stroke-width="1.5" stroke-linejoin="round"/>
<path d="M22.3 18.5 V28.5 M29.2 21 V28.5 M36 22.5 V28.5" stroke="#0d0d0d" stroke-width="1.3" fill="none"/>
</svg>
<div class="a" style="left:0;top:0;width:1899px;height:2px;background:#000"></div>
<div class="a" style="left:0;top:878px;width:1899px;height:2px;background:#000"></div>
<div class="a" style="left:0;top:0;width:2px;height:880px;background:#000"></div>
<div class="a" style="left:1897px;top:0;width:2px;height:880px;background:#000"></div>
</body></html>
